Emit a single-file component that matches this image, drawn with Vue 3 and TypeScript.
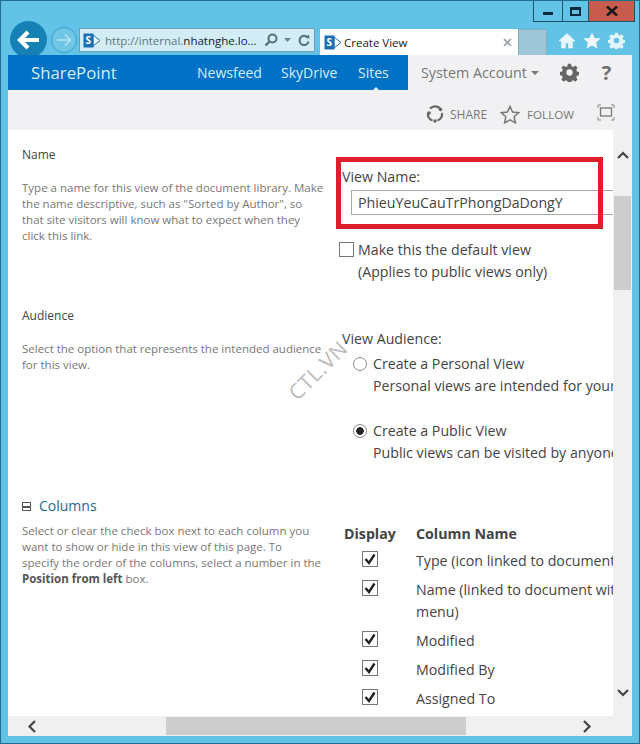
<template>
  <div class="window">
    <div class="caption-btns">
      <div class="cap min"><span class="min-bar"></span></div>
      <div class="cap max"><span class="max-box"></span></div>
      <div class="cap close">
        <svg width="12" height="10" viewBox="0 0 12 10"><path d="M1 0.5 L11 9.5 M11 0.5 L1 9.5" stroke="#1a1a1a" stroke-width="2.6" /></svg>
      </div>
    </div>

    <header class="chrome">
      <div class="back">
        <svg width="24" height="20" viewBox="0 0 24 20"><path d="M11 2 L3 10 L11 18 M3.5 10 H22" fill="none" stroke="#fff" stroke-width="4.2" /></svg>
      </div>
      <div class="forward">
        <svg width="16" height="14" viewBox="0 0 16 14"><path d="M9 1.5 L14.5 7 L9 12.5 M14 7 H1" fill="none" stroke="#b9e2f1" stroke-width="1.6" /></svg>
      </div>
      <div class="address">
        <svg class="sp" width="17" height="17" viewBox="0 0 17 17"><path d="M10 3 L17 8.5 L10 14 Z" fill="#fff" stroke="#1b6fb3" /><rect x="0.5" y="1.5" width="10" height="14" fill="#1b6fb3" /><text x="2.5" y="12" font-size="10" font-weight="700" fill="#fff" font-family="Open Sans, sans-serif">S</text></svg>
        <span class="url"><span class="dim">http://internal.</span>nhatnghe.lo...</span>
        <svg class="a-ico" width="14" height="14" viewBox="0 0 14 14"><circle cx="8.5" cy="5.5" r="4" fill="none" stroke="#56717d" stroke-width="2" /><path d="M5.5 8.5 L1.5 12.5" stroke="#56717d" stroke-width="2.4" /></svg>
        <svg class="a-drop" width="7" height="4" viewBox="0 0 7 4"><path d="M0 0 H7 L3.5 4 Z" fill="#6a8794" /></svg>
        <svg class="a-ico" width="12" height="13" viewBox="0 0 12 13"><path d="M9.6 3.4 A4.6 4.6 0 1 0 10.6 7.5" fill="none" stroke="#56717d" stroke-width="2" /><path d="M7 3.8 L11.5 4.6 L11 0.5 Z" fill="#56717d" /></svg>
      </div>
      <div class="tab">
        <svg width="17" height="17" viewBox="0 0 17 17"><path d="M10 3 L17 8.5 L10 14 Z" fill="#fff" stroke="#1b6fb3" /><rect x="0.5" y="1.5" width="10" height="14" fill="#1b6fb3" /><text x="2.5" y="12" font-size="10" font-weight="700" fill="#fff" font-family="Open Sans, sans-serif">S</text></svg>
        <span class="tab-title">Create View</span>
        <svg class="tab-x" width="9" height="9" viewBox="0 0 9 9"><path d="M1 1 L8 8 M8 1 L1 8" stroke="#9aa3a8" stroke-width="1.7" /></svg>
      </div>
      <div class="new-tab"></div>
      <div class="tools">
        <svg width="18" height="17" viewBox="0 0 18 17"><path d="M9 1.5 L17 9 H14.5 V16 H10.5 V11 H7.5 V16 H3.5 V9 H1 Z" fill="#e9f6fb" stroke="#e9f6fb" stroke-width="0.6" /></svg>
        <svg width="18" height="17" viewBox="0 0 18 17"><path d="M9 0.5 L11.6 6 L17.6 6.6 L13.1 10.6 L14.4 16.5 L9 13.4 L3.6 16.5 L4.9 10.6 L0.4 6.6 L6.4 6 Z" fill="#eef8fc" /></svg>
        <svg width="17" height="17" viewBox="0 0 24 24"><path :d="gearPath" fill="#e3f4fa" fill-rule="evenodd" /></svg>
      </div>
    </header>

    <div class="page">
      <div class="suite">
        <nav class="suite-blue">
          <span class="brand">SharePoint</span>
          <span class="nav n1">Newsfeed</span>
          <span class="nav n2">SkyDrive</span>
          <span class="nav n3">Sites<i class="caret"></i></span>
        </nav>
        <div class="suite-user">
          <span class="account">System Account</span>
          <svg class="acc-drop" width="8" height="4" viewBox="0 0 8 4"><path d="M0 0 H8 L4 4 Z" fill="#777" /></svg>
          <svg class="user-gear" width="19" height="19" viewBox="0 0 24 24"><path :d="gearPath" fill="#666" fill-rule="evenodd" /></svg>
          <span class="help">?</span>
        </div>
      </div>

      <div class="ribbon">
        <svg width="18" height="18" viewBox="0 0 18 18"><path d="M4 3.5 A7 7 0 0 1 14 3.4 M16 8 A7 7 0 0 1 11.5 15.5 M6.5 15.5 A7 7 0 0 1 2 8" fill="none" stroke="#666" stroke-width="2.2" /><circle cx="3" cy="8" r="1.8" fill="#666" /><circle cx="14.5" cy="4.5" r="1.8" fill="#666" /><circle cx="9" cy="16" r="1.8" fill="#666" /></svg>
        <span class="r-label share">SHARE</span>
        <svg class="r-star" width="20" height="19" viewBox="0 0 20 19"><path d="M10 1.5 L12.6 7 L18.6 7.7 L14.2 11.8 L15.4 17.8 L10 14.8 L4.6 17.8 L5.8 11.8 L1.4 7.7 L7.4 7 Z" fill="none" stroke="#777" stroke-width="1.5" /></svg>
        <span class="r-label follow">FOLLOW</span>
        <svg class="r-focus" width="18" height="17" viewBox="0 0 18 17"><rect x="3.5" y="4" width="11" height="8" fill="none" stroke="#777" stroke-width="1.3" /><path d="M1 4 V1 H4 M14 1 H17 V4 M17 13 V16 H14 M4 16 H1 V13" fill="none" stroke="#888" /></svg>
      </div>

      <div class="body">
        <main class="content">
          <span class="watermark">CTL.VN</span>

          <section class="sec sec-name">
            <div class="left">
              <h3 class="sec-title">Name</h3>
              <p class="desc">Type a name for this view of the document library. Make<br />the name descriptive, such as "Sorted by Author", so<br />that site visitors will know what to expect when they<br />click this link.</p>
            </div>
            <div class="right name-right">
              <div class="highlight"></div>
              <div class="label">View Name:</div>
              <div class="name-input">PhieuYeuCauTrPhongDaDongY</div>
              <div class="default-row">
                <span class="plain-box"></span>
                <div class="label">Make this the default view<br />(Applies to public views only)</div>
              </div>
            </div>
          </section>

          <section class="sec sec-aud">
            <div class="left">
              <h3 class="sec-title">Audience</h3>
              <p class="desc">Select the option that represents the intended audience<br />for this view.</p>
            </div>
            <div class="right aud-right">
              <div class="label">View Audience:</div>
              <div v-for="o in audience" :key="o.title" class="radio-row">
                <span class="radio" :class="{ on: o.on }"></span>
                <div class="label nowrap">{{ o.title }}<br />{{ o.text }}</div>
              </div>
            </div>
          </section>

          <section class="sec sec-col">
            <div class="left">
              <h3 class="col-title">
                <span class="collapse"></span>
                Columns
              </h3>
              <p class="desc">Select or clear the check box next to each column you<br />want to show or hide in this view of this page. To<br />specify the order of the columns, select a number in the<br /><b>Position from left</b> box.</p>
            </div>
            <div class="right col-right">
              <div class="col-grid">
                <b class="th">Display</b>
                <b class="th">Column Name</b>
                <template v-for="c in columns" :key="c">
                  <span class="cell-check">
                    <svg width="16" height="16" viewBox="0 0 16 16"><rect x="0.5" y="0.5" width="15" height="15" fill="#fff" stroke="#777" /><path d="M3.5 8 L7 12 L12.5 3.5" fill="none" stroke="#222" stroke-width="2.4" /></svg>
                  </span>
                  <span class="label cell-name">{{ c }}</span>
                </template>
              </div>
            </div>
          </section>
        </main>

        <aside class="vscroll">
          <svg width="12" height="8" viewBox="0 0 12 8"><path d="M1 7 L6 2 L11 7" fill="none" stroke="#444" stroke-width="2.2" /></svg>
          <div class="v-track"><div class="v-thumb"></div></div>
          <svg width="12" height="8" viewBox="0 0 12 8"><path d="M1 1 L6 6 L11 1" fill="none" stroke="#444" stroke-width="2.2" /></svg>
        </aside>
      </div>

      <div class="hscroll">
        <svg width="10" height="13" viewBox="0 0 10 13"><path d="M8 1 L2.5 6.5 L8 12" fill="none" stroke="#444" stroke-width="2.2" /></svg>
        <div class="h-track"><div class="h-thumb"></div></div>
        <svg width="10" height="13" viewBox="0 0 10 13"><path d="M2 1 L7.5 6.5 L2 12" fill="none" stroke="#444" stroke-width="2.2" /></svg>
      </div>
    </div>
  </div>
</template>

<script setup lang="ts">
const gearPath =
  'M10 1h4l.6 3 2.2.9 2.6-1.7 2.8 2.8-1.7 2.6.9 2.2 3 .6v4l-3 .6-.9 2.2 1.7 2.6-2.8 2.8-2.6-1.7-2.2.9-.6 3h-4l-.6-3-2.2-.9-2.6 1.7-2.8-2.8 1.7-2.6-.9-2.2-3-.6v-4l3-.6.9-2.2-1.7-2.6 2.8-2.8 2.6 1.7 2.2-.9zM12 8a4 4 0 1 0 0 8 4 4 0 0 0 0-8z'

const audience = [
  { title: 'Create a Personal View', text: 'Personal views are intended for your use only.', on: false },
  { title: 'Create a Public View', text: 'Public views can be visited by anyone using the site.', on: true },
]

const columns = ['Type (icon linked to document)', 'Name (linked to document with edit menu)', 'Modified', 'Modified By', 'Assigned To']
</script>

<style>
html,
body {
  margin: 0;
  overflow: hidden;
}
</style>

<style scoped>
.window {
  position: relative;
  box-sizing: border-box;
  width: 640px;
  height: 744px;
  display: flex;
  flex-direction: column;
  overflow: hidden;
  background: #62c3e6;
  border: 1px solid #1f6f8c;
  font-family: "Open Sans", "Liberation Sans", sans-serif;
  color: #444;
}

.caption-btns {
  position: absolute;
  top: -1px;
  left: 532px;
  display: flex;
  height: 22px;
}
.cap {
  display: flex;
  align-items: center;
  justify-content: center;
  border: 1px solid #14536c;
  border-left: 0;
}
.min {
  width: 28px;
  border-left: 1px solid #14536c;
}
.max {
  width: 25px;
}
.close {
  width: 45px;
  background: #c75b4e;
}
.min-bar {
  width: 10px;
  height: 3px;
  margin-top: 5px;
  background: #0b2a3c;
}
.max-box {
  box-sizing: border-box;
  width: 11px;
  height: 9px;
  border: 2px solid #0b2a3c;
  border-top-width: 3px;
}

.chrome {
  flex: 0 0 54px;
  display: flex;
  align-items: flex-start;
  overflow: hidden;
}
.back {
  flex: none;
  display: flex;
  align-items: center;
  justify-content: center;
  width: 37px;
  height: 37px;
  margin: 20px 0 0 9px;
  border-radius: 50%;
  background: #1681b5;
}
.forward {
  flex: none;
  display: flex;
  align-items: center;
  justify-content: center;
  box-sizing: border-box;
  width: 26px;
  height: 26px;
  margin: 26px 0 0 4px;
  border: 1px solid #3b9fc6;
  border-radius: 50%;
  background: #70c6e6;
}
.address {
  flex: none;
  box-sizing: border-box;
  display: flex;
  align-items: center;
  width: 236px;
  height: 24px;
  margin: 27px 0 0 2px;
  padding-left: 3px;
  background: #d3edf7;
  border: 1px solid #6d9fb5;
}
.url {
  margin-left: 5px;
  width: 155px;
  font-size: 11.5px;
  color: #10222c;
  white-space: nowrap;
}
.dim {
  color: #62757f;
}
.a-ico {
  margin-left: 4px;
}
.a-drop {
  margin-left: 6px;
  margin-right: 3px;
}
.tab {
  flex: none;
  box-sizing: border-box;
  display: flex;
  align-items: center;
  width: 198px;
  height: 26px;
  margin: 28px 0 0 5px;
  padding-left: 4px;
  background: #fff;
}
.tab-title {
  margin-left: 3px;
  font-size: 11.5px;
  color: #222;
}
.tab-x {
  margin-left: auto;
  margin-right: 6px;
}
.new-tab {
  flex: none;
  box-sizing: border-box;
  width: 29px;
  height: 26px;
  margin-top: 28px;
  background: #9fc6d6;
  border: 1px solid #7fb0c4;
  border-bottom: 0;
}
.tools {
  display: flex;
  align-items: center;
  gap: 7px;
  height: 22px;
  margin: 28px 0 0 11px;
}

.page {
  flex: 1;
  min-height: 0;
  display: flex;
  flex-direction: column;
  margin: 0 7px 7px;
  background: #f1f1f3;
}

.suite {
  flex: 0 0 35px;
  display: flex;
}
.suite-blue {
  position: relative;
  display: flex;
  align-items: center;
  width: 400px;
  color: #d6effa;
  background: #0072c6;
}
.brand {
  width: 166px;
  padding-left: 23px;
  font-size: 16.8px;
}
.nav {
  font-size: 14px;
}
.n1 {
  width: 84px;
}
.n2 {
  width: 77px;
}
.n3 {
  position: relative;
}
.caret {
  position: absolute;
  left: 14px;
  bottom: -9px;
  border: 4px solid transparent;
  border-bottom-color: #e4eef6;
}
.suite-user {
  flex: 1;
  display: flex;
  align-items: center;
  padding-left: 13px;
  color: #777;
}
.account {
  font-size: 14.3px;
}
.acc-drop {
  margin-left: 4px;
}
.user-gear {
  margin-left: 21px;
}
.help {
  margin-left: 23px;
  font-size: 20px;
  font-weight: 700;
  color: #707070;
}

.ribbon {
  flex: 0 0 40px;
  display: flex;
  align-items: center;
  padding: 8px 0 0 418px;
  box-sizing: border-box;
}
.r-label {
  font-size: 12px;
  color: #777;
}
.share {
  margin-left: 6px;
}
.r-star {
  margin-left: 13px;
}
.follow {
  margin-left: 7px;
  font-size: 11.6px;
}
.r-focus {
  margin-left: 23px;
  margin-top: -4px;
}

.body {
  flex: 1;
  min-height: 0;
  display: flex;
}
.content {
  position: relative;
  flex: 1;
  min-width: 0;
  overflow: hidden;
  background: #fff;
}
.watermark {
  position: absolute;
  left: 273px;
  top: 226px;
  font-size: 21px;
  letter-spacing: 0.6px;
  color: #bbb;
  transform: rotate(-45deg);
}

.sec {
  display: grid;
  grid-template-columns: 320px 1fr;
  padding-left: 14px;
}
.sec-name {
  height: 177px;
  padding-top: 16px;
  box-sizing: border-box;
}
.sec-aud {
  height: 189px;
}
.sec-title {
  margin: 0 0 16px;
  font-size: 12px;
  font-weight: 400;
  line-height: 18px;
  color: #444;
}
.desc {
  margin: 0;
  font-size: 11.5px;
  line-height: 16px;
  color: #777;
  white-space: nowrap;
}
.desc b {
  color: #555;
}
.right {
  position: relative;
  min-width: 0;
}
.name-right {
  padding-top: 20px;
}
.label {
  font-size: 14.2px;
  line-height: 22px;
  color: #444;
}
.nowrap {
  white-space: nowrap;
}
.highlight {
  position: absolute;
  left: -6px;
  top: 11px;
  box-sizing: border-box;
  width: 267px;
  height: 72px;
  border: 5px solid #dd1f2d;
  pointer-events: none;
}
.name-input {
  box-sizing: border-box;
  width: 300px;
  height: 25px;
  margin: 2px 0 0 9px;
  padding-left: 6px;
  font-size: 14.2px;
  line-height: 23px;
  color: #444;
  border: 1px solid #a8a8a8;
  white-space: nowrap;
}
.default-row {
  display: flex;
  margin: 24px 0 0 -3px;
  gap: 4px;
}
.plain-box {
  flex: none;
  box-sizing: border-box;
  width: 15px;
  height: 15px;
  margin-top: 3px;
  border: 1px solid #777;
}
.aud-right {
  padding-top: 21px;
}
.radio-row {
  display: flex;
  gap: 6px;
  margin: 3px 0 23px 11px;
}
.radio {
  flex: none;
  box-sizing: border-box;
  width: 14px;
  height: 14px;
  margin-top: 4px;
  border: 1px solid #888;
  border-radius: 50%;
}
.radio.on {
  background: radial-gradient(circle, #222 0 3.5px, #fff 4px);
}
.col-title {
  display: flex;
  align-items: center;
  gap: 8px;
  margin: 0 0 7px;
  font-size: 14px;
  font-weight: 400;
  line-height: 20px;
  color: #1b6a8c;
}
.collapse {
  box-sizing: border-box;
  width: 9px;
  height: 9px;
  background: linear-gradient(#fff 0 3px, #555 3px 5px, #fff 5px);
  border: 1px solid #555;
}
.col-right {
  padding-top: 27px;
}
.col-grid {
  display: grid;
  grid-template-columns: 72px 1fr;
  width: 320px;
  margin-left: 2px;
}
.th {
  font-size: 14.2px;
  line-height: 22px;
  margin-bottom: 5px;
  color: #444;
}
.cell-check {
  padding: 0 0 0 18px;
}
.cell-name {
  padding-bottom: 7px;
  line-height: 22px;
}

.vscroll {
  flex: 0 0 19px;
  display: flex;
  flex-direction: column;
  align-items: center;
  padding: 21px 0 19px;
  box-sizing: border-box;
  background: #f0f0f0;
}
.v-track {
  flex: 1;
  align-self: stretch;
  padding: 37px 1px 0;
}
.v-thumb {
  height: 94px;
  background: #cdcdcd;
}
.hscroll {
  flex: 0 0 20px;
  display: flex;
  align-items: center;
  box-sizing: border-box;
  padding: 0 40px 0 19px;
  background: #f0f0f0;
}
.h-track {
  flex: 1;
  align-self: stretch;
  padding: 1px 0 1px 129px;
}
.h-thumb {
  width: 300px;
  height: 100%;
  background: #cdcdcd;
}
</style>
